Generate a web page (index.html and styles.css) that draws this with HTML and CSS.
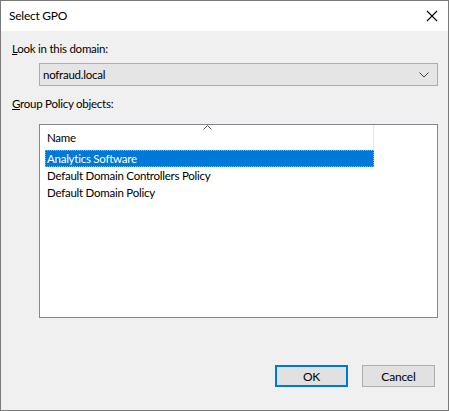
FILE: index.html
```html
<!DOCTYPE html>
<html>
<head>
<meta charset="utf-8">
<link rel="stylesheet" href="styles.css">
</head>
<body>
<div class="window">
  <div class="titlebar">
    <span class="title">Select GPO</span>
    <svg class="close" width="12" height="12" viewBox="0 0 12 12"><path d="M1 1L11 11M11 1L1 11" stroke="#000" stroke-width="1.1" fill="none"/></svg>
  </div>
  <div class="content">
    <div class="label label-first"><u>L</u>ook in this domain:</div>
    <div class="combo">
      <span class="combo-text">nofraud.local</span>
      <svg class="chev" width="10" height="6" viewBox="0 0 10 6"><path d="M0.5 0.5L5 5L9.5 0.5" stroke="#444" stroke-width="1" fill="none"/></svg>
    </div>
    <div class="label label-second"><u>G</u>roup Policy objects:</div>
    <div class="list">
      <div class="header">
        <div class="col">
          <svg class="sort" width="9" height="5" viewBox="0 0 9 5"><path d="M0.5 4.5L4.5 0.5L8.5 4.5" stroke="#555" stroke-width="1" fill="none"/></svg>
          <span class="col-text">Name</span>
        </div>
      </div>
      <div class="rows">
        <div class="row selected">Analytics Software</div>
        <div class="row">Default Domain Controllers Policy</div>
        <div class="row">Default Domain Policy</div>
      </div>
    </div>
    <div class="buttons">
      <button class="btn btn-default">OK</button>
      <button class="btn">Cancel</button>
    </div>
  </div>
</div>
</body>
</html>
```

FILE: styles.css
```css
* { box-sizing: border-box; }
html, body { margin: 0; padding: 0; }
body {
  width: 449px;
  height: 411px;
  font-family: "Lato", "Noto Sans", sans-serif;
  font-size: 11.5px;
  letter-spacing: -0.25px;
  color: #000;
  background: #f0f0f0;
}
.window {
  width: 449px;
  height: 411px;
  border: 1px solid #7a7a7a;
  display: flex;
  flex-direction: column;
  background: #f0f0f0;
}
.titlebar {
  height: 30px;
  background: #fff;
  display: flex;
  align-items: center;
  padding-left: 8px;
  padding-right: 10px;
  justify-content: space-between;
}
.title { font-size: 12px; line-height: 16px; }
.close { display: block; }
.content {
  flex: 1;
  display: flex;
  flex-direction: column;
  padding: 0 10px 0 11px;
}
.label { line-height: 16px; height: 16px; }
.label-first { margin-top: 10px; }
.combo {
  margin-top: 6px;
  margin-left: 27px;
  height: 23px;
  width: 399px;
  border: 1px solid #adadad;
  background: #e5e5e5;
  display: flex;
  align-items: center;
  justify-content: space-between;
  padding: 0 8px 0 3px;
}
.combo-text { line-height: 16px; }
.chev { display: block; }
.label-second { margin-top: 10px; }
.list {
  margin-top: 12px;
  margin-left: 27px;
  width: 399px;
  height: 194px;
  border: 1px solid #828790;
  background: #fff;
}
.header {
  height: 25px;
  display: flex;
}
.col {
  width: 334px;
  height: 24px;
  border-right: 1px solid #e5e5e5;
  position: relative;
  display: flex;
  align-items: center;
  padding-left: 7px;
  padding-top: 1px;
}
.sort { position: absolute; left: 163px; top: 0px; }
.rows { padding-left: 5px; }
.row {
  width: 329px;
  height: 17px;
  line-height: 15px;
  padding-left: 1px;
  border: 1px solid transparent;
  white-space: nowrap;
}
.selected {
  background: #0078d7;
  color: #fff;
  border: 1px dotted #f0a030;
}
.buttons {
  margin-top: 47px;
  display: flex;
  justify-content: flex-end;
  gap: 14px;
  padding-right: 3px;
}
.btn {
  width: 73px;
  height: 22px;
  font-family: inherit;
  font-size: 12px;
  letter-spacing: -0.2px;
  background: #e1e1e1;
  border: 1px solid #adadad;
  padding: 0;
  color: #000;
}
.btn-default { border: 2px solid #0078d7; }
```
